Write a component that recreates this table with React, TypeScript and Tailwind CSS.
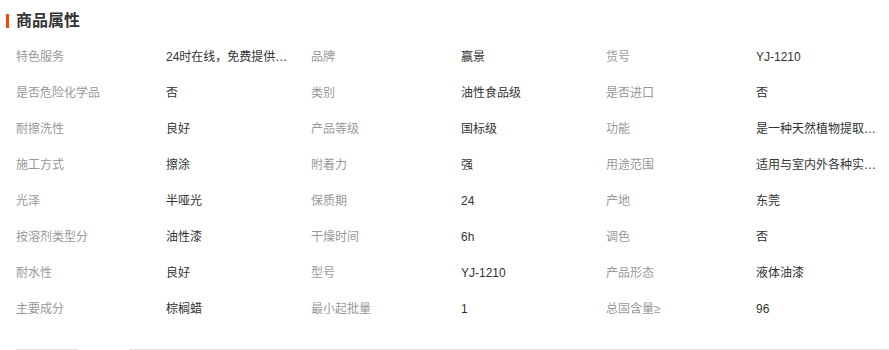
const rows: [string, string][][] = [
  [["特色服务", "24时在线，免费提供上门服务"], ["品牌", "赢景"], ["货号", "YJ-1210"]],
  [["是否危险化学品", "否"], ["类别", "油性食品级"], ["是否进口", "否"]],
  [["耐擦洗性", "良好"], ["产品等级", "国标级"], ["功能", "是一种天然植物提取的油性涂料"]],
  [["施工方式", "擦涂"], ["附着力", "强"], ["用途范围", "适用与室内外各种实木家具"]],
  [["光泽", "半哑光"], ["保质期", "24"], ["产地", "东莞"]],
  [["按溶剂类型分", "油性漆"], ["干燥时间", "6h"], ["调色", "否"]],
  [["耐水性", "良好"], ["型号", "YJ-1210"], ["产品形态", "液体油漆"]],
  [["主要成分", "棕榈蜡"], ["最小起批量", "1"], ["总固含量≥", "96"]],
];

export default function App() {
  return (
    <div
      className="h-[350px] w-[889px] overflow-hidden bg-white"
      style={{ fontFamily: '"Liberation Sans", "Noto Sans CJK SC", sans-serif' }}
    >
      <div className="flex h-[39px] items-center pl-[6px] pt-[2px]">
        <span className="mr-[7px] h-[14px] w-[3px] bg-[#ff4400]" />
        <h2 className="text-[16px] font-bold leading-none text-[#333]">商品属性</h2>
      </div>
      <div className="pl-[16px]">
        {rows.map((row, i) => (
          <div key={i} className="flex h-[36px] items-center text-[12px]">
            {row.map(([label, value]) => (
              <div key={label} className="flex w-[295px] shrink-0">
                <span className="w-[150px] shrink-0 text-[#999]">{label}</span>
                <span className="w-[126px] truncate text-[#333]">{value}</span>
              </div>
            ))}
          </div>
        ))}
      </div>
      <div className="mt-[22px] flex">
        <div className="ml-[16px] w-[62px] border-t border-[#e5e5e5]" />
        <div className="ml-[51px] flex-1 border-t border-[#e5e5e5]" />
      </div>
    </div>
  );
}
